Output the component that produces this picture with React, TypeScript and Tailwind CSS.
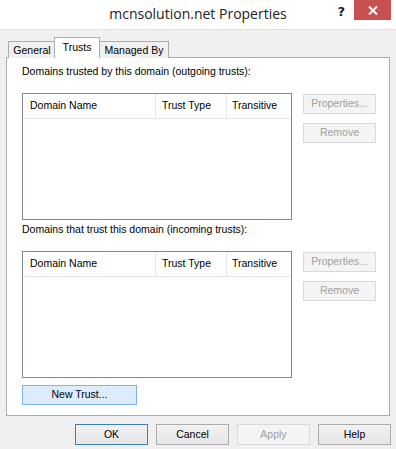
import type { ReactNode } from 'react';

const UI_FONT = { fontFamily: '"Liberation Sans", Arial, sans-serif' };

function DlgButton({
  children,
  kind = 'normal',
  className = '',
}: {
  children: ReactNode;
  kind?: 'normal' | 'default' | 'disabled' | 'focused';
  className?: string;
}) {
  const look =
    kind === 'default'
      ? 'border-[#3c7fb1] bg-gradient-to-b from-[#f2f2f2] to-[#e5e5e5] text-black'
      : kind === 'disabled'
        ? 'border-[#d9d9d9] bg-[#f4f4f4] text-[#a0a0a0]'
        : kind === 'focused'
          ? 'border-[#7eb4ea] bg-[#dcecfc] text-black'
          : 'border-[#acacac] bg-gradient-to-b from-[#f2f2f2] to-[#e5e5e5] text-black';
  return (
    <div className={`flex items-center justify-center border text-[10.5px] ${look} ${className}`}>
      {children}
    </div>
  );
}

function TrustList() {
  return (
    <div className="w-[271px] h-[127px] border border-[#828790] bg-white flex flex-col">
      <div className="h-[25px] flex border-b border-[#e5e5e5] text-[10.5px] text-black">
        <div className="w-[133px] flex items-center pl-[7px] border-r border-[#e5e5e5]">Domain Name</div>
        <div className="w-[71px] flex items-center pl-[6px] border-r border-[#e5e5e5]">Trust Type</div>
        <div className="w-[64px] flex items-center pl-[5px]">Transitive</div>
      </div>
      <div className="flex-1" />
    </div>
  );
}

function TrustSection({ label, first }: { label: string; first?: boolean }) {
  return (
    <div className={`flex flex-col ${first ? 'mt-[7px]' : 'mt-[3px]'}`}>
      <div className="h-[13px] leading-[13px] text-[10.5px] text-black">{label}</div>
      <div className="flex mt-[15px]">
        <TrustList />
        <div className="ml-[11px] pt-px flex flex-col gap-[9px]">
          <DlgButton kind="disabled" className="w-[73px] h-[20px]">Properties...</DlgButton>
          <DlgButton kind="disabled" className="w-[73px] h-[20px]">Remove</DlgButton>
        </div>
      </div>
    </div>
  );
}

export default function App() {
  return (
    <div className="w-[396px] h-[449px] bg-[#f0f0f0] flex flex-col overflow-hidden" style={UI_FONT}>
      {/* Title bar */}
      <div className="h-[30px] bg-white border-b border-[#e3e3e3] grid grid-cols-[1fr_auto_1fr]">
        <div />
        <div
          className="pt-[4px] text-[14px] leading-[20px] text-[#222]"
          style={{ fontFamily: '"Open Sans", "Noto Sans", sans-serif' }}
        >
          mcnsolution.net Properties
        </div>
        <div className="flex justify-end items-start">
          <div className="pt-[2px] mr-[9px] text-[13px] font-bold text-[#222]" style={{ fontFamily: '"DejaVu Sans", sans-serif' }}>
            ?
          </div>
          <div className="w-[37px] h-[20px] mr-[5px] bg-[#c75050] flex items-center justify-center">
            <svg width="10" height="9" viewBox="0 0 10 9">
              <path d="M1 0.5 L9 8.5 M9 0.5 L1 8.5" stroke="white" strokeWidth="2" />
            </svg>
          </div>
        </div>
      </div>

      {/* Tabs */}
      <div className="flex items-end pl-[8px] mt-[7px] h-[21px] -mb-px text-[10.5px] text-black relative z-10">
        <div className="w-[48px] h-[17px] border border-b-0 border-[#acacac] bg-[#f0f0f0] flex items-center justify-center pt-px">
          General
        </div>
        <div className="-ml-[2px] w-[46px] h-[21px] border border-b-0 border-[#acacac] bg-white flex items-start justify-center pt-[2px]">
          Trusts
        </div>
        <div className="w-[69px] h-[17px] border border-b-0 border-l-0 border-[#acacac] bg-[#f0f0f0] flex items-center justify-center pt-px">
          Managed By
        </div>
      </div>

      {/* Panel */}
      <div className="ml-[6px] w-[384px] h-[359px] border border-[#acacac] bg-white px-[15px] flex flex-col">
        <TrustSection first label="Domains trusted by this domain (outgoing trusts):" />
        <TrustSection label="Domains that trust this domain (incoming trusts):" />
        <DlgButton kind="focused" className="mt-[7px] w-[115px] h-[20px]">New Trust...</DlgButton>
      </div>

      {/* Footer buttons */}
      <div className="flex justify-end gap-[8px] pr-[5px] mt-[8px]">
        <DlgButton kind="default" className="w-[73px] h-[21px]">OK</DlgButton>
        <DlgButton className="w-[73px] h-[21px]">Cancel</DlgButton>
        <DlgButton kind="disabled" className="w-[73px] h-[21px]">Apply</DlgButton>
        <DlgButton className="w-[73px] h-[21px]">Help</DlgButton>
      </div>
    </div>
  );
}
